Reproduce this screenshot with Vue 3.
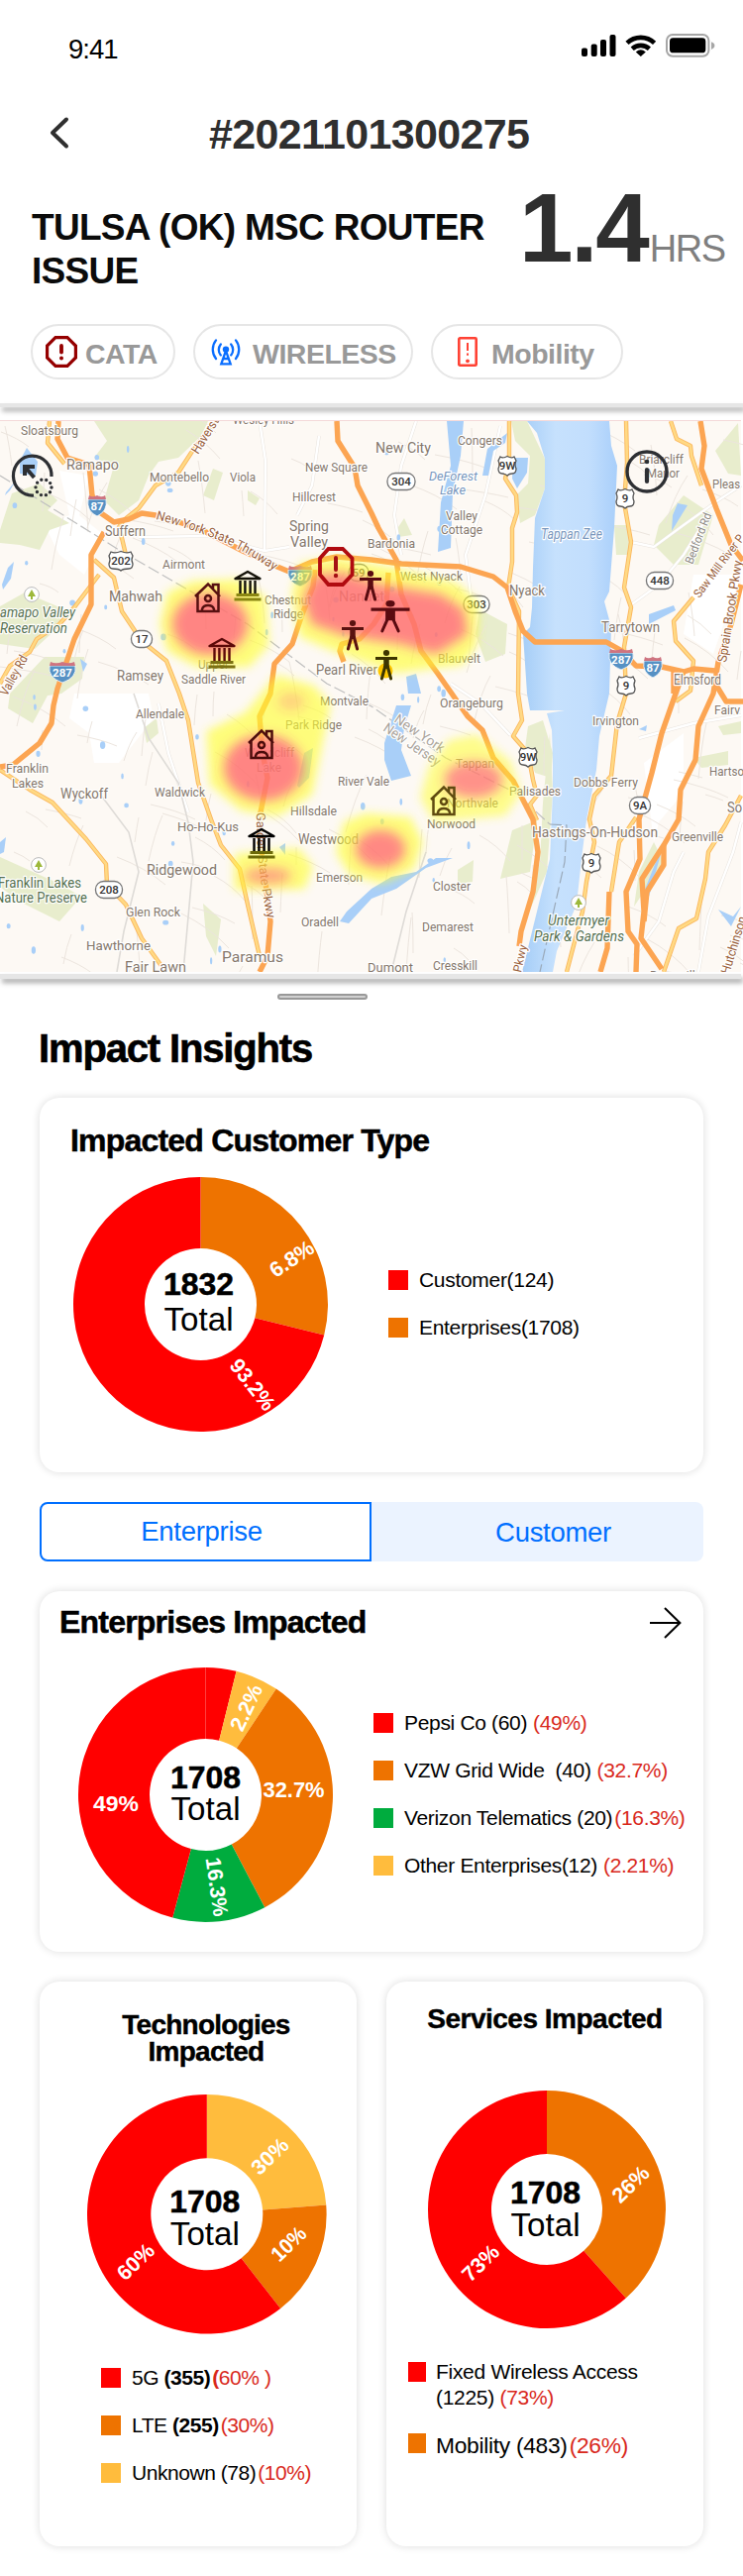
<script setup>
import { h } from 'vue'

const RED = '#ff0000'
const ORANGE = '#ee7300'
const GREEN = '#00ac3e'
const YELLOW = '#ffbc3d'
const SANS = '"Liberation Sans", Arial, sans-serif'

function point(r, deg) {
  const a = ((deg - 90) * Math.PI) / 180
  return `${(r * Math.cos(a)).toFixed(2)} ${(r * Math.sin(a)).toFixed(2)}`
}
function slice(outer, inner, from, to) {
  const large = to - from > 180 ? 1 : 0
  return `M${point(outer, from)}A${outer} ${outer} 0 ${large} 1 ${point(outer, to)}L${point(inner, to)}A${inner} ${inner} 0 ${large} 0 ${point(inner, from)}Z`
}

const Donut = (props) => {
  const { r, inner, slices, labels, total, tx, ty, gap } = props.chart
  const text = (attrs, value) =>
    h('text', { 'font-family': SANS, 'text-anchor': 'middle', lengthAdjust: 'spacingAndGlyphs', ...attrs }, value)
  return h(
    'svg',
    { width: r * 2, height: r * 2, viewBox: `${-r} ${-r} ${r * 2} ${r * 2}`, style: 'display:block;overflow:visible;flex:none' },
    [
      ...slices.map(([from, to, fill]) => h('path', { d: slice(r, inner, from, to), fill })),
      ...labels.map(([value, x, y, rot, len]) =>
        text({ transform: `translate(${x} ${y}) rotate(${rot})`, y: 7.4, 'font-size': 21.5, 'font-weight': 700, fill: '#fff', textLength: len }, value)
      ),
      text({ x: tx, y: ty, 'font-size': 32, 'font-weight': 700, fill: '#000', stroke: '#000', 'stroke-width': 0.5, textLength: 71 }, total),
      text({ x: tx, y: ty + gap, 'font-size': 33, fill: '#000', textLength: 70 }, 'Total')
    ]
  )
}
Donut.props = ['chart']

const customerChart = {
  r: 128.5, inner: 56.5, total: '1832', tx: -2, ty: -9.5, gap: 36,
  slices: [[0, 104, ORANGE], [104, 360, RED]],
  labels: [['6.8%', 92, -46, -34, 49], ['93.2%', 52.5, 81, 52, 60]]
}
const enterpriseChart = {
  r: 128.5, inner: 56.5, total: '1708', tx: 0, ty: -6.5, gap: 32,
  slices: [[0, 14, RED], [14, 33.7, YELLOW], [33.7, 152.3, ORANGE], [152.3, 195, GREEN], [195, 360, RED]],
  labels: [['49%', -90.5, 9, 0, 46], ['32.7%', 89, -4.5, 0, 62], ['2.2%', 41, -88, -65, 49], ['16.3%', 11.5, 93, 82, 60]]
}
const techChart = {
  r: 120.8, inner: 56.5, total: '1708', tx: -2, ty: -1.4, gap: 33,
  slices: [[0, 85.6, YELLOW], [85.6, 142, ORANGE], [142, 360, RED]],
  labels: [['30%', 63.5, -58.5, -44, 43], ['10%', 82.5, 30, -44, 40], ['60%', -72, 48, -44, 43]]
}
const serviceChart = {
  r: 120, inner: 56, total: '1708', tx: -1.5, ty: -6.4, gap: 33,
  slices: [[0, 138.3, ORANGE], [138.3, 360, RED]],
  labels: [['26%', 84.5, -25.5, -44, 43], ['73%', -67, 54, -44, 43]]
}

const enterpriseLegend = [
  { color: RED, text: 'Pepsi Co (60)', pct: '(49%)', cls: 'gap6' },
  { color: ORANGE, text: 'VZW Grid Wide \u00a0(40)', pct: '(32.7%)', cls: 'gap6' },
  { color: GREEN, text: 'Verizon Telematics (20)', pct: '(16.3%)', cls: 'gap2' },
  { color: YELLOW, text: 'Other Enterprises(12)', pct: '(2.21%)', cls: 'gap6' }
]

// ---- Map data, in page coordinates -------------------------------------
const T = '#85776b', P = '#55704f', B = '#7796bd', R = '#9a5f3c'
// text, x, baseline, width, size, colour, italic, rotation
const places = [
  ['Sloatsburg', 21, 439, 58, 13], ['Ramapo', 67, 474, 53, 15], ['Montebello', 151, 486, 60, 13], ['Viola', 232, 486, 26, 13],
  ['Wesley Hills', 235, 428, 62, 13], ['New Square', 308, 476, 63, 13], ['Hillcrest', 295, 506, 44, 13], ['Spring', 292, 536, 40, 15],
  ['Valley', 293, 552, 38, 15], ['Airmont', 164, 574, 43, 13], ['Suffern', 106, 541, 41, 14], ['Mahwah', 110, 607, 54, 15],
  ['Chestnut', 267, 610, 47, 13], ['Ridge', 276, 624, 30, 13], ['Upper', 200, 675, 31, 13], ['Saddle River', 183, 690, 65, 13],
  ['Ramsey', 118, 687, 47, 14], ['amapo Valley', 0, 623, 76, 14, P, 1], ['Reservation', 0, 639, 68, 14, P, 1],
  ['Nanuet', 342, 607, 46, 15], ['Pearl River', 319, 681, 62, 14], ['Bardonia', 371, 553, 48, 13], ['West Nyack', 404, 586, 63, 13],
  ['New City', 379, 457, 56, 15], ['Congers', 462, 449, 45, 13], ['DeForest', 433, 485, 49, 13, B, 1], ['Lake', 444, 499, 26, 13, B, 1],
  ['Valley', 450, 525, 32, 13], ['Cottage', 445, 539, 42, 13], ['Nyack', 514, 601, 36, 14], ['Tappan Zee', 546, 544, 62, 14, B, 1],
  ['Briarcliff', 645, 468, 45, 13], ['Manor', 653, 482, 33, 13], ['Pleas', 719, 493, 28, 13], ['Tarrytown', 607, 638, 59, 15],
  ['Elmsford', 680, 691, 48, 14], ['Blauvelt', 442, 669, 43, 13], ['Allendale', 137, 725, 49, 13], ['Park Ridge', 288, 736, 57, 13],
  ['Montvale', 323, 712, 49, 13], ['Woodcliff', 247, 764, 50, 13], ['Lake', 259, 779, 25, 13], ['Franklin', 6, 780, 43, 13],
  ['Lakes', 12, 795, 32, 13], ['Wyckoff', 61, 806, 48, 14], ['Waldwick', 156, 804, 51, 13], ['Hillsdale', 293, 823, 47, 13],
  ['Ho-Ho-Kus', 179, 839, 62, 13], ['Westwood', 301, 852, 61, 14], ['Ridgewood', 148, 883, 71, 15], ['Emerson', 319, 890, 47, 13],
  ['Franklin Lakes', -2, 896, 84, 14, P], ['Nature Preserve', -5, 911, 93, 14, P], ['Glen Rock', 127, 925, 55, 13],
  ['Oradell', 304, 935, 38, 13], ['Hawthorne', 87, 959, 65, 13], ['Fair Lawn', 126, 981, 62, 14], ['Paramus', 224, 971, 62, 15],
  ['River Vale', 341, 793, 52, 13], ['Orangeburg', 444, 714, 64, 13], ['New York', 397, 728, 58, 14, '#aaa39b', 0, 34],
  ['New Jersey', 386, 737, 66, 14, '#aaa39b', 0, 34], ['Irvington', 598, 732, 47, 13], ['Dobbs Ferry', 579, 794, 65, 13],
  ['Tappan', 460, 775, 39, 13], ['Palisades', 514, 803, 52, 13], ['Northvale', 451, 815, 52, 13], ['Norwood', 431, 836, 49, 13],
  ['Hastings-On-Hudson', 537, 845, 127, 14], ['Closter', 437, 899, 38, 13], ['Demarest', 426, 940, 52, 13], ['Cresskill', 437, 979, 45, 13],
  ['Dumont', 371, 981, 46, 13], ['Untermyer', 553, 934, 62, 14, P, 1], ['Park & Gardens', 539, 950, 91, 14, P, 1],
  ['Hartso', 716, 783, 35, 13], ['So', 734, 820, 15, 14], ['Greenville', 678, 849, 52, 13], ['Fairv', 721, 721, 26, 13],
  ['Bronxville', 656, 989, 52, 13], ['Bedford Rd', 699, 570, 54, 12, '#8c8781', 0, -69], ['Saw Mill River P', 706, 604, 76, 12, R, 0, -53],
  ['Sprain Brook Pkwy', 733, 669, 104, 13, R, 0, -81], ['Haverst', 200, 459, 40, 13, R, 0, -58], ['Valley Rd', 7, 703, 44, 13, R, 0, -61],
  ['Pkwy', 526, 982, 28, 12, R, 0, -78], ['Hutchinson', 736, 984, 60, 13, R, 0, -73]
]
const orange = [
  '59,425 58,443 68,462 90,469 93,500 102,518 115,527 130,524 143,518 157,520 200,533 245,556 280,572 292,577 315,567 340,562 375,565 405,569 465,572 498,582 512,593 520,617 528,637 540,648 612,648 628,657 642,672 668,673 690,678 700,675 722,677',
  '105,537 92,560 92,610 75,645 58,695 54,712 52,730 40,750 13,772 0,774',
  '340,425 341,445 358,472 361,490 375,518 382,533 400,565 405,600 418,630 425,657 442,680 456,700 472,723 487,737 498,765 518,788 538,827 543,860 538,900 526,940 524,955',
  '318,575 316,592 305,620 295,650 277,670 273,700 262,723 265,760 270,785 263,820 264,860 273,930 270,965 262,981',
  '392,578 390,610 377,630 363,645 345,650 343,657 347,668',
  '707,425 711,450 708,473 723,513 738,550 750,566',
  '748,590 738,630 725,668 720,700 705,733 702,767 687,797 685,827 670,853 648,887 650,920 647,947 668,978',
  '690,678 682,700 668,740 658,780 645,827 646,867 632,900 634,940 643,953 642,981',
  '670,853 670,873 653,900 650,930', '615,900 613,957 606,981', '680,678 680,700', '722,690 733,708 750,708'
]
const yellow = [
  '514,425 514,467 510,483 521,500 522,517 517,533 517,567 513,593 524,617 523,700 527,727 518,743 533,760 538,787 542,803 535,812 542,828',
  '632,425 633,467 630,507 637,547 630,593 637,613 630,653 632,700 623,730 617,783 600,803 595,827 600,850 592,890 588,920 572,981',
  '677,425 683,443 697,450 698,460 708,490', '700,603 680,627 682,647 700,667 697,697 682,708',
  '748,803 732,833 715,860 712,887 703,927 685,937 670,981', '642,825 625,850 617,900',
  '95,565 115,583 123,617 143,647 168,667 181,700 190,727 200,790 213,827 223,853 242,877 250,913 262,965',
  '0,777 30,797 53,810 87,847 107,872 108,893 127,913 143,947 163,975', '50,425 48,447 65,468',
  '217,425 193,457 180,477 157,490 140,513 125,525 120,532 123,543 127,560', '100,580 75,613 60,630 37,645 30,658 10,672 0,690'
]
const white = [
  '262,425 268,465 267,555', '140,542 210,541 267,556 292,552', '322,440 315,490 300,520', '420,425 405,470 398,520 405,560',
  '505,430 490,500 470,560 475,600', '637,547 660,552 690,530 725,505 748,490', '635,612 665,590 690,560 715,520', '645,745 700,730 748,722',
  '455,690 485,710 515,742', '160,710 170,760 190,820', '640,965 665,930 680,880 690,860', '705,981 715,925 740,860 748,830'
]
const parks = [
  '95,425 210,425 203,440 180,462 160,466 150,480 140,505 120,520 105,505 115,470 95,462 108,445', '0,535 12,498 40,488 58,505 48,515 70,528 50,535 40,555 20,550 0,548',
  '0,612 25,598 58,612 62,630 35,655 0,650', '10,700 45,663 85,663 83,685 62,700 48,702 33,730 8,715', '0,865 60,892 82,905 60,930 20,910 0,895',
  '516,425 532,425 550,463 550,493 540,520 525,528 521,500 533,488 535,460 520,445', '533,733 548,727 558,760 556,785 540,780 530,755',
  '517,838 542,828 535,880 505,887', '555,740 558,800 552,880 534,920 528,940 545,870 548,810', '665,530 690,500 720,520 705,570 680,570 660,550',
  '722,455 745,427 748,480 735,478', '620,530 634,530 636,560 622,560', '484,615 512,630 510,660 490,668 480,640', '645,880 660,850 670,870 640,915', '400,535 408,523 416,540 402,542',
  '700,765 735,758 735,772 708,775', '725,733 748,728 748,740 730,742', '250,495 262,503 258,510 250,505', '205,500 215,473 225,477 216,505', '145,735 158,725 160,740 148,750', '462,878 478,868 477,890 462,892', '205,912 223,928 218,965 208,945'
]
const whites = ['75,700 150,700 155,725 120,770 95,770 90,740 70,725', '60,475 90,480 80,520 105,540 85,580 60,560 45,530 70,520', '660,850 650,770 690,740 690,800 665,830', '700,580 748,580 720,660 690,640']
const river = '532,425 542,437 550,463 550,493 540,523 538,573 537,613 535,633 528,640 532,700 535,717 570,717 552,720 557,737 558,767 558,800 555,867 542,920 527,981 558,981 562,960 582,913 587,867 592,827 602,777 605,743 615,700 617,633 610,607 615,597 620,533 623,470 617,450 615,425'
const lakes = [
  '451,425 468,425 465,460 457,497 455,553 442,557 445,507 455,470', '492,453 512,437 510,447 498,455 493,480 487,480', '518,462 533,462 532,477 522,493 517,483',
  '388,750 400,712 415,712 408,735 405,757 415,783 395,788 388,767', '343,930 350,920 375,897 395,885 420,880 440,866 457,866 430,876 400,897 375,907 352,932',
  '20,465 27,452 38,466 36,480 20,478', '6,497 16,485 10,495 5,500', '2,590 8,573 14,567 11,584 3,595', '81,665 88,670 84,678', '300,793 307,760 316,755 312,785 302,795', '410,683 420,680 425,700 412,700',
  '655,620 680,611 682,616 655,630', '679,520 684,508 694,510 678,536', '650,900 662,870 667,862 655,905 648,918', '725,918 740,925 748,915 738,935', '0,850 6,845 4,860 0,862', '282,855 288,851 288,863', '645,736 653,732 652,738'
]

// Minor streets: short, faint strokes scattered with a fixed seed.
let seed = 11
const rnd = () => ((seed = (seed * 16807) % 2147483647) / 2147483647)
const streets = Array.from({ length: 210 }, () => {
  const x = rnd() * 750, y = 425 + rnd() * 555
  const a = (rnd() > 0.5 ? 1.4 : 0.15) + rnd() * 0.6
  const l = 18 + rnd() * 45
  const dx = Math.cos(a) * l, dy = Math.sin(a) * l
  return `M${x.toFixed(0)} ${y.toFixed(0)}q${(dx * 0.6).toFixed(0)} ${(dy * 0.4).toFixed(0)} ${dx.toFixed(0)} ${dy.toFixed(0)}`
}).join('')
const ponds = Array.from({ length: 60 }, () => [rnd() * 500, 430 + rnd() * 545, 1 + rnd() * 2, 2 + rnd() * 2])

const interstates = [['87', 98, 509, 9], ['287', 303, 580, 12], ['287', 63, 677, 13], ['287', 627, 664, 12], ['87', 659, 672, 9]]
const usRoutes = [['202', 122, 566, 12], ['9W', 512, 470, 9], ['9', 631, 503, 9], ['9', 632, 692, 9], ['9W', 533, 764, 9], ['9', 597, 871, 9]]
const stateRoutes = [['304', 405, 486, 14], ['17', 143, 645, 10.5], ['59', 362, 578, 10], ['303', 481, 610, 13], ['448', 666, 586, 13.5], ['208', 110, 898, 13.5], ['9A', 646, 813, 10.5]]
const parkPins = [[32, 600], [39, 873], [584, 911]]

const banks = [[250, 591, '#15130a', '#8a8612'], [224, 659, '#5d0909', '#7c7112'], [264, 851, '#000', '#6d6a08']]
const houses = [[210, 603, '#571010'], [264, 751, '#4d0c0c'], [448, 808, '#5f4a10']]
const people = [[374, 591, 11, 1, '#5a0b10'], [394, 622, 19.5, 1.06, '#5a0b10'], [356, 641, 11, 1, '#5a1210'], [390, 671, 11, 1, '#3d3500']]
</script>

<template>
  <div class="page">
    <header class="top">
      <div class="status">
        <span class="time">9:41</span>
        <svg class="status-icons" width="136" height="24" viewBox="586 34 136 24">
          <rect x="587" y="48.6" width="6" height="8.4" rx="2" /><rect x="596.7" y="44.6" width="6" height="12.4" rx="2" />
          <rect x="606" y="40" width="6" height="17" rx="2" /><rect x="615.5" y="35" width="6" height="22" rx="2" />
          <g fill="none" stroke="#000" stroke-width="4.6"><path d="M633 43.4a20 20 0 0 1 27.6 0" /><path d="M638.2 49.3a12.6 12.6 0 0 1 17.2 0" /></g>
          <path d="M641.8 52.4q5-4.4 10 0L646.8 57Z" />
          <rect x="673" y="35" width="42.4" height="21.8" rx="6" fill="none" stroke="#a6a6a6" stroke-width="2" />
          <rect x="676" y="38.3" width="36.3" height="15" rx="3.4" /><path d="M718 42.3q3.4 1.2 3.4 3.8t-3.4 3.8Z" fill="#a6a6a6" />
        </svg>
      </div>
      <nav class="nav">
        <svg width="24" height="34" viewBox="0 0 24 34"><path d="M20 3.5 6 17 20 30.5" fill="none" stroke="#2f2f2f" stroke-width="4" stroke-linecap="round" stroke-linejoin="round" /></svg>
        <span class="ticket">#2021101300275</span>
      </nav>
      <div class="title-row">
        <h1>TULSA (OK) MSC ROUTER ISSUE</h1>
        <div class="hours"><b>1.4</b><span>HRS</span></div>
      </div>
      <div class="chips">
        <div class="chip cata">
          <svg width="32" height="32" viewBox="0 0 32 32"><path d="M10 1.6H22L30.4 10V22L22 30.4H10L1.6 22V10Z" fill="#fff" stroke="#950000" stroke-width="3.2" /><path d="M16 10v6.6" stroke="#950000" stroke-width="3.8" stroke-linecap="round" /><circle cx="16" cy="22.4" r="2" fill="#950000" /></svg>
          <span>CATA</span>
        </div>
        <div class="chip wireless">
          <svg width="30" height="27" viewBox="0 0 30 27" fill="none" stroke="#0a6eff" stroke-width="2.3" stroke-linecap="round"><path d="M5 1.4A15 15 0 0 0 5 20M9.8 5.4a8.6 8.6 0 0 0 0 11M25 1.4a15 15 0 0 1 0 18.6M20.2 5.4a8.6 8.6 0 0 1 0 11M15 12 10.3 25.4H19.7ZM12.4 20H17.6" /><circle cx="15" cy="10.6" r="3.2" fill="#0a6eff" stroke="none" /></svg>
          <span>WIRELESS</span>
        </div>
        <div class="chip mobility">
          <svg width="20" height="30" viewBox="0 0 20 30"><rect x="1.3" y="1.3" width="17.4" height="27.4" rx="1" fill="none" stroke="#ff4234" stroke-width="2.6" /><path d="M10 6v8M10 16.4v2.4" stroke="#ff4234" stroke-width="2" /><circle cx="10" cy="24.3" r="1.9" fill="#ff4234" /></svg>
          <span>Mobility</span>
        </div>
      </div>
    </header>

    <div class="rule"></div>
    <svg class="map" width="750" height="557" viewBox="0 424 750 557">
      <defs>
        <filter id="soft" x="-40%" y="-40%" width="180%" height="180%"><feGaussianBlur stdDeviation="5" /></filter>
        <filter id="softer" x="-40%" y="-40%" width="180%" height="180%"><feGaussianBlur stdDeviation="6" /></filter>
        <linearGradient id="river"><stop offset="0" stop-color="#a5cdf7" /><stop offset=".35" stop-color="#c6e1fd" /><stop offset=".7" stop-color="#c2defd" /><stop offset="1" stop-color="#a9cffa" /></linearGradient>
        <path id="thruway" d="M157 524Q190 533 218 544T278 577" /><path id="gsp" d="M259 820Q258 870 270 928" />
      </defs>
      <rect x="0" y="424" width="748" height="557" fill="#fdf9f4" />
      <polygon v-for="p in whites" :key="p" :points="p" fill="#fff" />
      <polygon v-for="p in parks" :key="p" :points="p" fill="#e8edcd" />
      <path :d="streets" fill="none" stroke="#ece5de" stroke-width="1" />
      <path d="M0 480 120 555 250 630 330 690 375 713 450 765 520 800 555 832" fill="none" stroke="#bfbfbf" stroke-width="1.2" stroke-dasharray="12 4" />
      <polyline v-for="p in white" :key="p" :points="p" fill="none" stroke="#e9e4de" stroke-width="3.4" />
      <polyline v-for="p in white" :key="p + 'w'" :points="p" fill="none" stroke="#fff" stroke-width="2.4" />
      <ellipse v-for="(p, i) in ponds" :key="i" :cx="p[0]" :cy="p[1]" :rx="p[2]" :ry="p[3]" fill="#a9cff8" />
      <path d="M135 700 150 745 180 790 190 830 195 870 185 981M100 800 130 840 140 880 125 940 118 981M430 860 410 920 395 981" fill="none" stroke="#dedbd7" stroke-width="1.6" />
      <polygon :points="river" fill="url(#river)" />
      <path d="M555 832 572 833 570 870 545 981" fill="none" stroke="#9aa9b9" stroke-width="1.2" stroke-dasharray="12 4" />
      <polygon v-for="p in lakes" :key="p" :points="p" fill="#a9cff8" />
      <g fill="none" stroke-linejoin="round">
        <polyline v-for="p in yellow" :key="p" :points="p" stroke="#fbb75e" stroke-width="4.4" />
        <polyline v-for="p in yellow" :key="p + 'i'" :points="p" stroke="#ffd984" stroke-width="2.6" />
        <polyline v-for="p in orange" :key="p" :points="p" stroke="#fca552" stroke-width="5.4" />
      </g>
      <g font-family="Roboto, sans-serif" stroke="#fff" stroke-width="2.4" stroke-linejoin="round" paint-order="stroke">
        <text v-for="(p, i) in places" :key="i" :transform="`translate(${p[1]} ${p[2]}) rotate(${p[7] || 0})`" :font-size="p[4]" :fill="p[5] || T" :font-style="p[6] ? 'italic' : 'normal'" :textLength="p[3]" lengthAdjust="spacingAndGlyphs">{{ p[0] }}</text>
        <text font-size="13" :fill="R"><textPath href="#thruway" textLength="131" lengthAdjust="spacingAndGlyphs">New York State Thruway</textPath></text>
        <text font-size="12.5" :fill="R"><textPath href="#gsp" textLength="108" lengthAdjust="spacingAndGlyphs">Garden State Pkwy</textPath></text>
      </g>
      <g font-family="Roboto, sans-serif" font-size="11.5" font-weight="500" text-anchor="middle" fill="#333">
        <g v-for="(s, i) in stateRoutes" :key="'s' + i"><rect :x="s[1] - s[3]" :y="s[2] - 8.5" :width="s[3] * 2" height="17" rx="8" fill="#fff" stroke="#777" stroke-width="1.3" /><text :x="s[1]" :y="s[2] + 4">{{ s[0] }}</text></g>
        <g v-for="(s, i) in usRoutes" :key="'u' + i" :transform="`translate(${s[1]} ${s[2]})`"><path :d="`M${-s[3] + 2} -9Q${-s[3] / 2} -7 0 -9.5Q${s[3] / 2} -7 ${s[3] - 2} -9L${s[3]} -5Q${s[3] - 2} -1 ${s[3]} 3Q${s[3]} 8 ${s[3] - 4} 8Q2 8 0 10Q-2 8 ${-s[3] + 4} 8Q${-s[3]} 8 ${-s[3]} 3Q${-s[3] + 2} -1 ${-s[3]} -5Z`" fill="#fff" stroke="#555" stroke-width="1.3" /><text y="4">{{ s[0] }}</text></g>
        <g v-for="(s, i) in interstates" :key="'i' + i" :transform="`translate(${s[1]} ${s[2]})`"><path :d="`M${-s[3]} -5H${s[3]}Q${s[3] + 2} 7 0 12Q${-s[3] - 2} 7 ${-s[3]} -5Z`" fill="#5691c4" stroke="#fff" stroke-width=".8" /><path :d="`M${-s[3]} -5 ${-s[3] + 1} -9Q${-s[3] / 2} -6.5 0 -9Q${s[3] / 2} -6.5 ${s[3] - 1} -9L${s[3]} -5Z`" fill="#ce7480" /><text y="6.4" fill="#fff" font-weight="700">{{ s[0] }}</text></g>
      </g>
      <g v-for="(p, i) in parkPins" :key="'p' + i" :transform="`translate(${p[0]} ${p[1]})`"><circle r="7.4" fill="#fff" stroke="#bbb" stroke-width="1" /><path d="M0 -5 4 2H1V5H-1V2H-4Z" fill="#9db83b" /></g>

      <g fill="#ffff30" stroke="#ffff30" stroke-width="7" opacity=".62" filter="url(#soft)">
        <path d="M172 600 195 590 240 588 265 605 268 650 250 670 200 670 172 655 165 630Z" />
        <path d="M305 572 340 566 400 577 460 592 480 610 478 650 465 668 400 676 340 655 305 640 298 600Z" />
        <path d="M280 685 315 695 330 712 322 750 312 800 280 820 245 815 215 790 212 740 250 722Z" />
        <path d="M240 865 300 860 312 875 305 894 240 895Z" /><path d="M350 832 370 824 412 828 423 850 415 875 385 888 355 880 343 860Z" />
        <path d="M455 750 480 745 512 770 522 800 508 820 440 826 428 805 436 775Z" opacity=".85" />
      </g>
      <g fill="#ff3c88" filter="url(#softer)">
        <ellipse cx="212" cy="630" rx="38" ry="31" opacity=".62" />
        <path d="M318 580 345 578 385 590 445 600 468 615 472 640 440 660 405 650 350 642 315 630 306 605Z" opacity=".62" />
        <ellipse cx="266" cy="775" rx="40" ry="33" opacity=".62" /><ellipse cx="384" cy="857" rx="25" ry="19" opacity=".6" />
        <ellipse cx="478" cy="787" rx="29" ry="18" opacity=".55" /><ellipse cx="270" cy="884" rx="24" ry="8" opacity=".45" /><ellipse cx="294" cy="708" rx="14" ry="9" opacity=".22" />
      </g>

      <g v-for="(b, i) in banks" :key="'b' + i" :transform="`translate(${b[0]} ${b[1]})`" fill="none" :stroke="b[2]" stroke-width="2.4"><path d="M-12.5 -7 0 -14 12.5 -7Z" stroke-linejoin="round" /><path d="M-7.5 -5V8M-2.6 -5V8M2.6 -5V8M7.5 -5V8" /><path d="M-11.5 9.5H11.5M-13.5 14H13.5" :stroke="b[3]" stroke-width="2.8" /></g>
      <g v-for="(b, i) in houses" :key="'h' + i" :transform="`translate(${b[0]} ${b[1]})`" fill="none" :stroke="b[2]" stroke-width="2.5"><path d="M-13 -1 0 -13.5 12 -1M-10.5 -3V14H10.5V-13H5V-9" /><circle cy="1" r="3" /><path d="M-6 13V12Q-5 8 0 8T6 12V13" /></g>
      <circle cx="389" cy="677" r="7.5" fill="#ffc800" />
      <g v-for="(b, i) in people" :key="'m' + i" :transform="`translate(${b[0]} ${b[1]}) scale(1 ${b[3]})`" :fill="b[4]" :stroke="b[4]"><ellipse cy="-12" :rx="b[2] / 6 + 1.3" ry="3" stroke="none" /><path :d="`M${-b[2]} -6.5H${b[2]}`" stroke-width="3" /><path :d="`M${-b[2] / 4} -7H${b[2] / 4}V4H${-b[2] / 4}Z`" stroke="none" /><path :d="`M${-b[2] / 8} 2 ${-b[2] * 0.42} 14M${b[2] / 8} 2 ${b[2] * 0.42} 14`" fill="none" stroke-width="3" stroke-linecap="round" /></g>
      <path d="M331.5 554H346L355.5 563.5V580L346 590H331.5L323 580V563.5Z" fill="none" stroke="#b00b10" stroke-width="3.8" /><path d="M339 563V575" stroke="#a51014" stroke-width="4" stroke-linecap="round" /><circle cx="339" cy="581" r="2.2" fill="#a51014" />

      <g fill="none" stroke="#2d2f33" stroke-width="3.2"><path d="M52 481A19.3 20 0 1 0 34 500" /><circle cx="44" cy="492" r="8" stroke-width="3.4" stroke-dasharray="0 5.03" stroke-linecap="round" /><path d="M25 480V471H35M25 471 34.5 482" stroke-width="4" /></g>
      <circle cx="653" cy="476" r="20" fill="none" stroke="#2d2f33" stroke-width="3.4" /><path d="M653 474V486" stroke="#2d2f33" stroke-width="4.2" stroke-linecap="round" /><circle cx="653" cy="466" r="2.3" fill="#2d2f33" />
      <path d="M0 424.5H748" stroke="#f4d9d9" />
    </svg>
    <div class="rule bottom"></div>
    <div class="handle"></div>

    <main>
      <h2>Impact Insights</h2>

      <section class="card customers">
        <h3>Impacted Customer Type</h3>
        <div class="body">
          <Donut :chart="customerChart" />
          <ul class="legend">
            <li><i class="sw red"></i><span>Customer(124)</span></li>
            <li><i class="sw orange"></i><span>Enterprises(1708)</span></li>
          </ul>
        </div>
      </section>

      <div class="tabs"><button class="active">Enterprise</button><button class="idle">Customer</button></div>

      <section class="card enterprises">
        <div class="head">
          <h3>Enterprises Impacted</h3>
          <svg width="34" height="34" viewBox="0 0 34 34"><path d="M2 17H32M17 2 32.4 17 17 32" fill="none" stroke="#000" stroke-width="2" /></svg>
        </div>
        <div class="body">
          <Donut :chart="enterpriseChart" />
          <ul class="legend">
            <li v-for="row in enterpriseLegend" :key="row.text"><i class="sw" :style="{ background: row.color }"></i><span>{{ row.text }}</span><em :class="row.cls">{{ row.pct }}</em></li>
          </ul>
        </div>
      </section>

      <div class="pair">
        <section class="card tech">
          <h4>Technologies<br />Impacted</h4>
          <Donut class="chart" :chart="techChart" />
          <ul class="legend">
            <li><i class="sw red"></i><span>5G <b>(355)</b></span><em class="gap2"><b>(</b>60% )</em></li>
            <li><i class="sw orange"></i><span>LTE <b>(255)</b></span><em class="gap2">(30%)</em></li>
            <li><i class="sw yellow"></i><span>Unknown (78)</span><em class="gap2">(10%)</em></li>
          </ul>
        </section>
        <section class="card services">
          <h4>Services Impacted</h4>
          <Donut class="chart" :chart="serviceChart" />
          <ul class="legend">
            <li class="two"><i class="sw red"></i><span>Fixed Wireless Access<br />(1225) <em>(73%)</em></span></li>
            <li class="big"><i class="sw orange"></i><span>Mobility (483)</span><em class="gap2">(26%)</em></li>
          </ul>
        </section>
      </div>
    </main>
  </div>
</template>

<style>
body { background: #fff; }
</style>

<style scoped>
* { box-sizing: border-box; }
.page { width: 750px; height: 2600px; background: #fff; overflow: hidden; font-family: "Liberation Sans", Arial, sans-serif; color: #000; }
h1, h2, h3, h4, ul { margin: 0; padding: 0; list-style: none; }
em { font-style: normal; color: #d9291c; }
.top { height: 407px; }
.status { height: 80px; padding: 34px 28px 0 69px; display: flex; justify-content: space-between; }
.time { font-size: 27.5px; line-height: 31px; letter-spacing: -1px; }
.nav { margin-top: 30px; height: 50px; padding-left: 47px; display: flex; align-items: center; }
.nav svg { margin-top: -2px; }
.ticket { margin-left: 140px; font-size: 43px; line-height: 50px; font-weight: 700; letter-spacing: -.65px; color: #2f2f2f; }
.title-row { margin-top: 20px; height: 127px; display: flex; padding-left: 32px; }
h1 { width: 492px; padding: 28px 10px 0 0; font-size: 37px; line-height: 44px; letter-spacing: -.7px; color: #0b0b0b; }
.hours { display: flex; align-items: baseline; height: 100px; color: #2f2f2f; }
.hours b { font-size: 98px; line-height: 100px; letter-spacing: -2.2px; margin-right: 2px; }
.hours span { font-size: 38px; line-height: 44px; letter-spacing: -1.4px; color: #7f7f7f; }
.chips { margin: 20px 0 0 31px; display: flex; gap: 18px; }
.chip { height: 56px; border: 2px solid #e6e6e6; border-radius: 28px; display: flex; align-items: center; font-size: 28.5px; font-weight: 700; line-height: 32px; letter-spacing: -.5px; color: #999; }
.chip span { margin-top: 3px; }
.cata { width: 146px; padding-left: 13px; }
.cata svg { margin-top: -1px; }
.cata span { margin-left: 8px; }
.wireless { width: 222px; padding-left: 16px; }
.wireless span { margin-left: 12px; }
.mobility { width: 194px; padding-left: 25px; }
.mobility span { margin-left: 14px; }
.rule { width: 750px; height: 4px; background: #e6e6e6; box-shadow: 2px 4px 5px rgba(0, 0, 0, .35); }
.map { display: block; margin-top: 13px; }
.rule.bottom { margin-top: 2px; height: 5px; width: 748px; }
.handle { margin: 15px 0 0 280px; width: 91px; height: 6px; border: 2px solid #999; border-radius: 3px; background: #d0d0d0; }
h2 { margin: 26px 0 0 39px; font-size: 40px; line-height: 46px; letter-spacing: -1.15px; -webkit-text-stroke: .6px #000; }
h3 { font-size: 32px; line-height: 38px; letter-spacing: -.8px; -webkit-text-stroke: .5px #000; }
.card { background: #fff; border-radius: 20px; box-shadow: 0 0 9px rgba(0, 0, 0, .14); }
.body { display: flex; }
.legend { display: flex; flex-direction: column; gap: 28px; font-size: 21px; letter-spacing: -.3px; }
.legend li { display: flex; height: 20px; line-height: 20px; white-space: nowrap; }
.sw { width: 20px; height: 20px; margin-right: 11px; flex: none; }
.sw.orange { background: #ee7300; }
.sw.red { background: #f00; }
.sw.yellow { background: #ffbc3d; }
.gap6 { margin-left: 6px; }
.gap2 { margin-left: 2px; }
.customers { margin: 27px 0 0 40px; width: 670px; height: 378px; padding: 24px 0 0 31px; }
.customers .body { margin: 18px 0 0 3px; }
.customers .legend { margin: 94px 0 0 61px; }
.tabs { margin: 30px 0 0 40px; width: 670px; height: 60px; display: flex; }
.tabs button { flex: none; width: 335px; border: 0; font: 27.5px/32px "Liberation Sans", Arial, sans-serif; letter-spacing: -.3px; color: #006fff; }
.tabs .active { background: #fff; border: 2px solid #006fff; border-radius: 8px 0 0 8px; padding: 0 8px 0 0; }
.tabs .idle { background: #ebf3ff; border-radius: 0 8px 8px 0; padding: 2px 0 0 32px; }
.enterprises { margin: 30px 0 0 40px; width: 670px; height: 364px; padding: 12px 0 0 20px; }
.head { display: flex; justify-content: space-between; padding-right: 22px; }
.head svg { margin-top: 3px; }
.enterprises .body { margin: 27px 0 0 19px; }
.enterprises .legend { margin: 46px 0 0 41px; letter-spacing: -.33px; }
.pair { display: flex; gap: 30px; margin: 30px 0 0 40px; }
.pair .card { width: 320px; height: 570px; }
h4 { font-size: 28px; line-height: 27px; letter-spacing: -.75px; text-align: center; -webkit-text-stroke: .4px #000; }
.tech h4 { padding: 30px 0 0 16px; }
.tech .chart { margin: 30px 0 0 48px; }
.tech .legend { margin: 34px 0 0 62px; letter-spacing: -.45px; }
.services h4 { padding-top: 24px; letter-spacing: -.5px; }
.services .chart { margin: 59px 0 0 42px; }
.services .legend { margin: 34px 0 0 22px; gap: 0; }
.services .sw { width: 18px; margin-right: 10px; }
.services li.two { height: 72px; line-height: 26px; }
.two span { margin-top: -3px; }
.services .big { font-size: 22.8px; }
.big span, .big em { margin-top: 2px; }
</style>
